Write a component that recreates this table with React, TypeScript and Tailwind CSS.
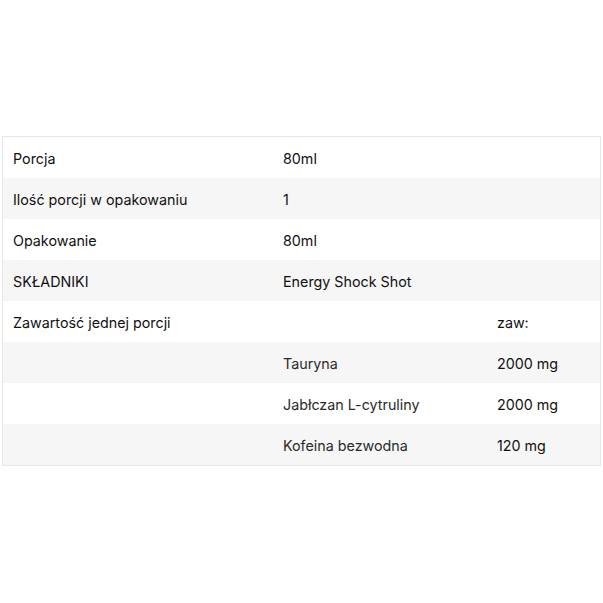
import React from "react";

const rows: [string, string, string][] = [
  ["Porcja", "80ml", ""],
  ["Ilość porcji w opakowaniu", "1", ""],
  ["Opakowanie", "80ml", ""],
  ["SKŁADNIKI", "Energy Shock Shot", ""],
  ["Zawartość jednej porcji", "", "zaw:"],
  ["", "Tauryna", "2000 mg"],
  ["", "Jabłczan L-cytruliny", "2000 mg"],
  ["", "Kofeina bezwodna", "120 mg"],
];

export default function App() {
  return (
    <div className="h-[603px] w-[603px] bg-white pt-[136px]" style={{ fontFamily: "Inter, 'Liberation Sans', sans-serif" }}>
      <div className="ml-[2px] w-[599px] border border-[#e6e6e6] text-[14.3px] text-[#111]">
        {rows.map((r, i) => (
          <div
            key={i}
            className={`grid grid-cols-[270px_214px_1fr] h-[41px] items-center pt-[2px] ${i % 2 === 1 ? "bg-[#f6f6f6]" : "bg-white"}`}
          >
            <div className="pl-[10px]">{r[0]}</div>
            <div className={`pl-[10px] ${i >= 5 ? "text-[#2a2a2a]" : ""}`}>{r[1]}</div>
            <div className="pl-[10px]">{r[2]}</div>
          </div>
        ))}
      </div>
    </div>
  );
}
